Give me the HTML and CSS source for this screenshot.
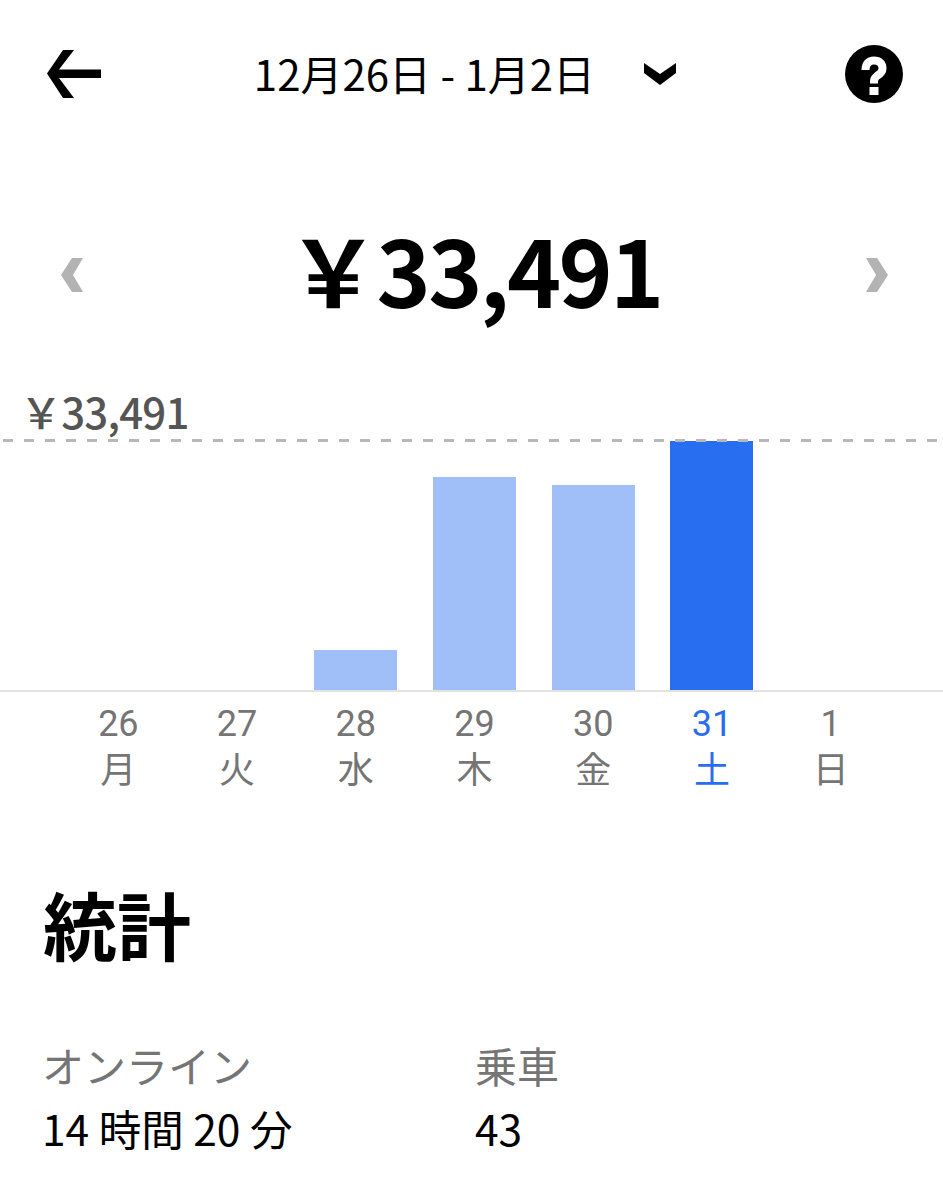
FILE: index.html
```html
<!DOCTYPE html>
<html lang="ja">
<head>
  <meta charset="UTF-8">
  <title>統計</title>
  <link rel="stylesheet" href="styles.css">
</head>
<body>
  <header class="topbar">
    <svg class="back-icon" viewBox="0 0 54 48" width="54" height="48">
      <path d="M0 23.5 16 0H27L12 19.5H54V28H12L27 48H16Z" fill="#000"/>
    </svg>
    <div class="range">
      <span class="range-text">12月26日 - 1月2日</span>
      <svg class="caret" viewBox="0 0 32 22" width="32" height="22">
        <path d="M0 0 16 11 32 0V10L16 22 0 10Z" fill="#000"/>
      </svg>
    </div>
    <svg class="help-icon" viewBox="0 0 58 58" width="58" height="58">
      <circle cx="29" cy="29" r="29" fill="#000"/>
      <path d="M20.5 25c0-6 3-9.500 8.500-9.500s8.500 3 8.500 8c0 4-2.500 5.500-5 7-2 1.500-3.500 2.500-3.500 6v2" fill="none" stroke="#fff" stroke-width="8"/>
      <rect x="24.500" y="42" width="9" height="8" fill="#fff"/>
    </svg>
  </header>

  <section class="total">
    <svg class="nav" viewBox="0 0 22 34" width="22" height="34"><path d="M11 0H22L12 17 22 34H11L0 17Z" fill="#b3b3b3"/></svg>
    <div class="amount">￥33,491</div>
    <svg class="nav" viewBox="0 0 22 34" width="22" height="34"><path d="M11 0H0L10 17 0 34H11L22 17Z" fill="#b3b3b3"/></svg>
  </section>

  <section class="chart">
    <div class="chart-max">￥33,491</div>
    <div class="plot">
      <div class="col"></div>
      <div class="col"></div>
      <div class="col"><div class="bar bar-28"></div></div>
      <div class="col"><div class="bar bar-29"></div></div>
      <div class="col"><div class="bar bar-30"></div></div>
      <div class="col"><div class="bar bar-31 active"></div></div>
      <div class="col"></div>
      <div class="max-line"></div>
    </div>
    <div class="days">
      <div class="day"><span>26</span><span>月</span></div>
      <div class="day"><span>27</span><span>火</span></div>
      <div class="day"><span>28</span><span>水</span></div>
      <div class="day"><span>29</span><span>木</span></div>
      <div class="day"><span>30</span><span>金</span></div>
      <div class="day current"><span>31</span><span>土</span></div>
      <div class="day"><span>1</span><span>日</span></div>
    </div>
  </section>

  <section class="stats">
    <h2>統計</h2>
    <div class="stat-row">
      <div class="stat stat-online">
        <div class="stat-label">オンライン</div>
        <div class="stat-value">14 時間 20 分</div>
      </div>
      <div class="stat">
        <div class="stat-label">乗車</div>
        <div class="stat-value">43</div>
      </div>
    </div>
  </section>
</body>
</html>
```

FILE: styles.css
```css
html, body {
  margin: 0;
  padding: 0;
  background: #fff;
}
body {
  width: 943px;
  height: 1200px;
  overflow: hidden;
  color: #000;
  font-family: "Noto Sans CJK JP", sans-serif;
}
.topbar {
  height: 150px;
  padding: 0 40px 2px 47px;
  box-sizing: border-box;
  display: flex;
  align-items: center;
  justify-content: space-between;
}
.range {
  display: flex;
  align-items: center;
  gap: 49px;
  margin-left: -16px;
}
.range-text {
  font-size: 42px;
  line-height: 50px;
  margin-bottom: 2px;
}
.total {
  height: 250px;
  padding: 0 55px 0 61px;
  box-sizing: border-box;
  display: flex;
  align-items: center;
  justify-content: space-between;
}
.amount {
  font-size: 92px;
  font-weight: 700;
  letter-spacing: -2.7px;
  line-height: 1;
  padding-bottom: 14px;
}
.chart-max {
  height: 41px;
  padding-left: 20px;
  font-size: 42px;
  font-weight: 500;
  line-height: 22px;
  letter-spacing: -0.8px;
  color: #555;
}
.plot {
  position: relative;
  height: 249px;
  padding: 0 53px 0 59px;
  display: flex;
  align-items: flex-end;
  border-bottom: 2px solid #e2e2e2;
}
.max-line {
  position: absolute;
  left: 0;
  right: 0;
  top: -2px;
  height: 3px;
  background: repeating-linear-gradient(90deg, #b8b8b8 0 10px, transparent 10px 21px) 3px 0;
}
.col {
  flex: 1;
  display: flex;
  justify-content: center;
}
.bar {
  width: 83px;
  background: #a0bff8;
}
.bar-28 { height: 40px; }
.bar-29 { height: 213px; }
.bar-30 { height: 205px; }
.bar-31 { height: 249px; }
.bar.active { background: #276ef1; }
.days {
  padding: 9px 53px 0 59px;
  display: flex;
  font-family: Roboto, "Noto Sans CJK JP", sans-serif;
  font-size: 36px;
  color: #757575;
}
.day {
  flex: 1;
  display: flex;
  flex-direction: column;
  align-items: center;
  line-height: 47px;
}
.day.current { color: #276ef1; }
.stats {
  padding: 84px 42px 0;
}
.stats h2 {
  margin: 0 0 0 1px;
  font-size: 74px;
  font-weight: 700;
  line-height: 88px;
}
.stat-row {
  margin-top: 69px;
  display: flex;
}
.stat-online {
  flex: 0 0 433px;
}
.stat-label {
  font-size: 42px;
  color: #757575;
  line-height: 58px;
}
.stat-value {
  font-size: 42.5px;
  line-height: 68px;
}
```
